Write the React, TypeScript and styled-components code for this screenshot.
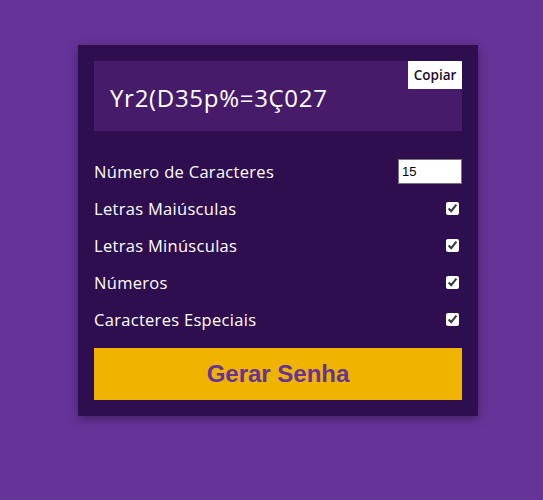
import React, { useState } from "react";
import styled, { createGlobalStyle } from "styled-components";

const Global = createGlobalStyle`
  html, body { margin: 0; padding: 0; background: #663399; }
  body { font-family: "Open Sans", "Lato", sans-serif; }
`;

const Page = styled.div`
  min-height: 500px;
  padding: 45px 0 0 78px;
  box-sizing: border-box;
`;

const Card = styled.div`
  width: 400px;
  box-sizing: border-box;
  background: #2e0e4f;
  padding: 16px;
  box-shadow: 0 3px 10px rgba(0, 0, 0, 0.35);
`;

const Result = styled.div`
  position: relative;
  height: 70px;
  background: #461c6a;
  display: flex;
  align-items: center;
  padding: 0 16px;
  box-sizing: border-box;
`;

const Password = styled.span`
  color: #ffffff;
  font-size: 24px;
  letter-spacing: 0.7px;
  margin-top: 2px;
`;

const CopyButton = styled.button`
  position: absolute;
  top: 0;
  right: 0;
  width: 54px;
  height: 28px;
  border: none;
  background: #ffffff;
  color: #1c0b33;
  font-family: "Open Sans", sans-serif;
  font-weight: 600;
  font-size: 13.5px;
  padding: 0;
  cursor: pointer;
`;

const Settings = styled.div`
  margin-top: 22px;
  display: flex;
  flex-direction: column;
`;

const Row = styled.label`
  display: flex;
  align-items: center;
  justify-content: space-between;
  height: 37px;
  color: #ffffff;
  font-size: 16.5px;
  letter-spacing: 0.3px;
`;

const NumberInput = styled.input`
  width: 64px;
  height: 25px;
  box-sizing: border-box;
  border: 1px solid #767676;
  font-family: "Liberation Sans", Arial, sans-serif;
  font-size: 13px;
  letter-spacing: 0;
  padding: 0 3px;
  color: #000;
`;

const Check = styled.input`
  width: 13px;
  height: 13px;
  margin: 0 3px 0 0;
  accent-color: #ffffff;
`;

const Generate = styled.button`
  margin-top: 10px;
  width: 100%;
  height: 52px;
  border: none;
  background: #efb300;
  color: #663399;
  font-family: "Liberation Sans", Arial, sans-serif;
  font-weight: bold;
  font-size: 24px;
  cursor: pointer;
`;

const options = [
  "Letras Maiúsculas",
  "Letras Minúsculas",
  "Números",
  "Caracteres Especiais",
];

export default function App() {
  const [len, setLen] = useState("15");
  return (
    <>
      <Global />
      <Page>
        <Card>
          <Result>
            <Password>Yr2(D35p%=3Ç027</Password>
            <CopyButton>Copiar</CopyButton>
          </Result>
          <Settings>
            <Row>
              Número de Caracteres
              <NumberInput type="number" value={len} onChange={(e) => setLen(e.target.value)} />
            </Row>
            {options.map((o) => (
              <Row key={o}>
                {o}
                <Check type="checkbox" defaultChecked />
              </Row>
            ))}
          </Settings>
          <Generate>Gerar Senha</Generate>
        </Card>
      </Page>
    </>
  );
}
